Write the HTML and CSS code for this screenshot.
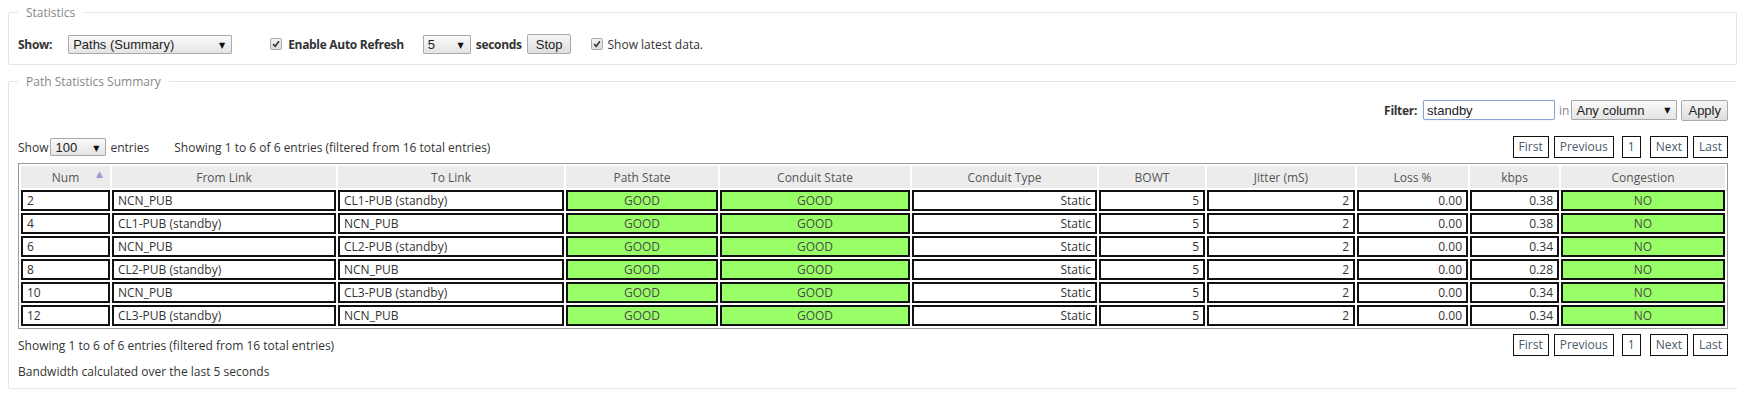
FILE: index.html
```html
<!DOCTYPE html>
<html lang="en">
<head>
    <meta charset="UTF-8">
    <title>Statistics</title>
    <link rel="stylesheet" href="styles.css">
</head>
<body>

<!-- Top options -->
<fieldset class="box">
    <legend>Statistics</legend>
    <div class="options-row">
        <label class="bold">Show:</label>
        <span class="select select-show">
            <select><option>Paths (Summary)</option></select>
        </span>
        <span class="check check-refresh">
            <svg width="10" height="10" viewBox="0 0 12 12"><path d="M2.5 6.2 L5 8.8 L9.6 2.8" fill="none" stroke="#333" stroke-width="1.9"/></svg>
        </span>
        <label class="bold">Enable Auto Refresh</label>
        <span class="select select-secs">
            <select><option>5</option></select>
        </span>
        <label class="bold secs">seconds</label>
        <button class="btn btn-stop">Stop</button>
        <span class="check check-latest">
            <svg width="10" height="10" viewBox="0 0 12 12"><path d="M2.5 6.2 L5 8.8 L9.6 2.8" fill="none" stroke="#333" stroke-width="1.9"/></svg>
        </span>
        <label>Show latest data.</label>
    </div>
</fieldset>

<!-- Summary table -->
<fieldset class="box box-summary">
    <legend>Path Statistics Summary</legend>

    <div class="filter-row">
        <label class="bold">Filter:</label>
        <input class="filter-input" type="text" value="standby">
        <span class="muted">in</span>
        <span class="select select-column">
            <select><option>Any column</option></select>
        </span>
        <button class="btn btn-apply">Apply</button>
    </div>

    <div class="table-top">
        <span>Show</span>
        <span class="select select-len">
            <select><option>100</option></select>
        </span>
        <span>entries</span>
        <span class="info-top">Showing 1 to 6 of 6 entries (filtered from 16 total entries)</span>
        <div class="pager">
            <a>First</a><a>Previous</a><a class="current">1</a><a>Next</a><a>Last</a>
        </div>
    </div>

    <table class="stats">
        <colgroup>
            <col style="width:89px"><col style="width:224px"><col style="width:226px">
            <col style="width:152px"><col style="width:190px"><col style="width:185px">
            <col style="width:106px"><col style="width:148px"><col style="width:111px">
            <col style="width:89px"><col style="width:164px">
        </colgroup>
        <thead>
            <tr>
                <th class="sorted">Num<span class="sort-arrow">&#9650;</span></th>
                <th>From Link</th>
                <th>To Link</th>
                <th>Path State</th>
                <th>Conduit State</th>
                <th>Conduit Type</th>
                <th>BOWT</th>
                <th>Jitter (mS)</th>
                <th>Loss %</th>
                <th>kbps</th>
                <th>Congestion</th>
            </tr>
        </thead>
        <tbody id="rows"></tbody>
    </table>

    <div class="table-bottom">
        <span>Showing 1 to 6 of 6 entries (filtered from 16 total entries)</span>
        <div class="pager">
            <a>First</a><a>Previous</a><a class="current">1</a><a>Next</a><a>Last</a>
        </div>
    </div>

    <p class="note">Bandwidth calculated over the last 5 seconds</p>
</fieldset>

<script>
    const paths = [
        [2, "NCN_PUB", "CL1-PUB (standby)", "0.38"],
        [4, "CL1-PUB (standby)", "NCN_PUB", "0.38"],
        [6, "NCN_PUB", "CL2-PUB (standby)", "0.34"],
        [8, "CL2-PUB (standby)", "NCN_PUB", "0.28"],
        [10, "NCN_PUB", "CL3-PUB (standby)", "0.34"],
        [12, "CL3-PUB (standby)", "NCN_PUB", "0.34"]
    ];

    const tbody = document.getElementById("rows");
    paths.forEach(p => {
        const tr = document.createElement("tr");
        tr.innerHTML = `
            <td>${p[0]}</td>
            <td>${p[1]}</td>
            <td>${p[2]}</td>
            <td class="good">GOOD</td>
            <td class="good">GOOD</td>
            <td class="num">Static</td>
            <td class="num">5</td>
            <td class="num">2</td>
            <td class="num">0.00</td>
            <td class="num">${p[3]}</td>
            <td class="good">NO</td>
        `;
        tbody.appendChild(tr);
    });
</script>

</body>
</html>
```

FILE: styles.css
```css
/* Page */
body {
    font-family: "Open Sans", "DejaVu Sans", sans-serif;
    font-size: 12px;
    color: #333;
    background: #fff;
    margin: 4px 8px 0;
}

.bold {
    font-weight: bold;
    letter-spacing: -0.3px;
}

.muted {
    color: #888;
}

/* Fieldsets */
.box {
    border: 1px solid #e4e4e4;
    border-radius: 2px;
    margin: 0 0 8px;
    padding: 13px 9px 10px;
}

.box legend {
    color: #888;
    padding: 0 8px;
    line-height: 17px;
}

.box-summary {
    padding: 10px 9px 8px;
}

/* Options row */
.options-row {
    display: flex;
    align-items: center;
    height: 20px;
}

.options-row label {
    margin-right: 4px;
}

.select {
    position: relative;
    display: inline-block;
}

.select select {
    appearance: none;
    -webkit-appearance: none;
    font-family: "Liberation Sans", Arial, sans-serif;
    font-size: 13px;
    color: #222;
    height: 19px;
    padding: 0 18px 0 4px;
    border: 1px solid #a9a9a9;
    border-radius: 1px;
    background: linear-gradient(#fafafa, #e4e4e4);
}

.select::after {
    content: "\25BC";
    position: absolute;
    right: 7px;
    top: 4px;
    font-size: 8px;
    color: #111;
    pointer-events: none;
}

.select-show { margin-left: 12px; }
.select-show select { width: 164px; }
.select-secs { margin-left: 15px; }
.select-secs select { width: 48px; }
.select-column select { width: 106px; height: 20px; }
.select-len { margin: 0 4px 0 2px; }
.select-len select { width: 56px; height: 18px; }

.options-row .secs {
    margin-left: 5px;
}

.check {
    display: inline-flex;
    align-items: center;
    justify-content: center;
    width: 10px;
    height: 10px;
    border: 1px solid #aaa;
    border-radius: 2px;
    background: linear-gradient(#f4f4f4, #dcdcdc);
    margin-right: 6px;
}

.check-refresh { margin-left: 38px; }
.check-latest { margin-left: 20px; margin-right: 4px; }

.btn {
    font-family: "Liberation Sans", Arial, sans-serif;
    font-size: 13px;
    color: #222;
    height: 20px;
    padding: 0 6px;
    border: 1px solid #aaa;
    border-radius: 2px;
    background: linear-gradient(#f6f6f6, #dedede);
}

.btn-stop {
    margin-left: 1px;
    padding: 0 8px;
}

/* Filter row */
.filter-row {
    display: flex;
    justify-content: flex-end;
    align-items: center;
    height: 20px;
}

.filter-row label {
    margin-right: 6px;
}

.filter-input {
    font-family: "Liberation Sans", Arial, sans-serif;
    font-size: 13px;
    color: #222;
    width: 124px;
    height: 18px;
    padding: 0 3px;
    border: 1px solid #84a5d6;
    border-radius: 2px;
    box-shadow: 0 0 1px #9bb7e0;
    margin-right: 4px;
}

.filter-row .muted {
    margin-right: 2px;
}

.btn-apply {
    margin-left: 4px;
    height: 21px;
}

/* Above and below table */
.table-top, .table-bottom {
    display: flex;
    align-items: center;
}

.table-top {
    margin-top: 16px;
    height: 22px;
}

.info-top {
    margin-left: 25px;
}

.pager {
    margin-left: auto;
    display: flex;
}

.pager a {
    display: inline-block;
    border: 1px solid #111;
    color: #4a5a6a;
    padding: 0 5px;
    line-height: 20px;
    margin-left: 5px;
    cursor: pointer;
}

.pager a.current {
    margin: 0 4px 0 8px;
}

.table-bottom {
    margin-top: 5px;
    height: 22px;
}

.note {
    margin: 7px 0 0;
    line-height: 17px;
}

/* Stats table */
.stats {
    width: 100%;
    table-layout: fixed;
    border: 1px solid #999;
    border-spacing: 2px;
    margin-top: 5px;
}

.stats th {
    position: relative;
    background: #ececec;
    color: #555;
    font-weight: normal;
    height: 22px;
    padding: 0;
    text-align: center;
}

.sort-arrow {
    position: absolute;
    right: 7px;
    top: 1px;
    font-size: 9px;
    color: #9c9ce0;
}

.stats td {
    border: 2px solid #111;
    height: 17px;
    padding: 0 4px;
    white-space: nowrap;
    overflow: hidden;
}

.stats td.num {
    text-align: right;
}

.stats td.good {
    background: #99ff66;
    color: #4a4a4a;
    text-align: center;
}
```
